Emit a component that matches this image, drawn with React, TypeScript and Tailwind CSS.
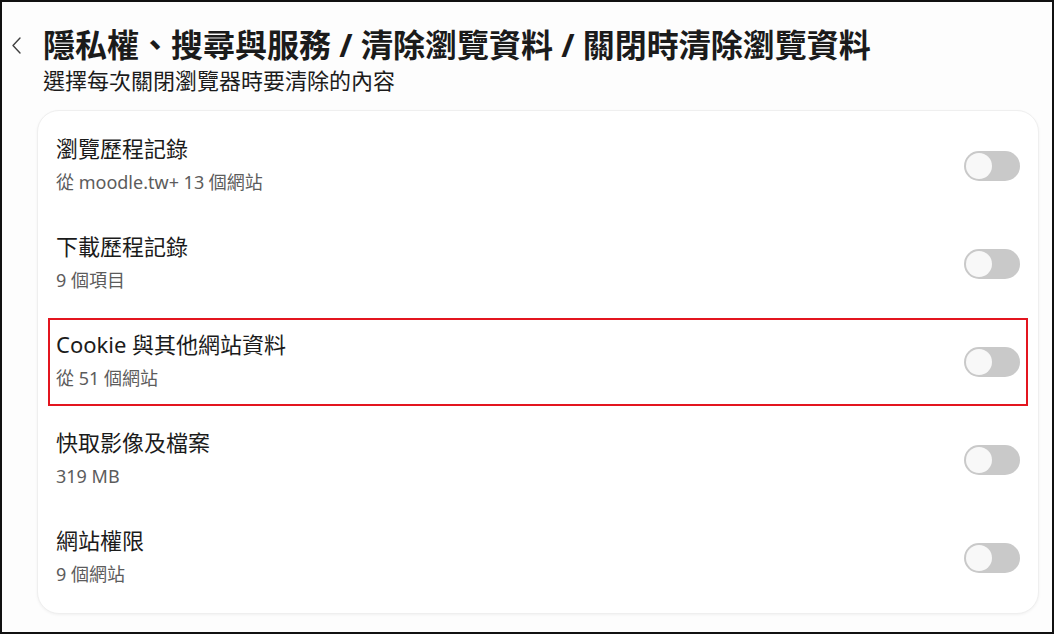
import { memo } from "react";

type TItem = {
  title: string;
  desc: string;
  highlight?: boolean;
};

const ITEMS: TItem[] = [
  { title: "瀏覽歷程記錄", desc: "從 moodle.tw+ 13 個網站" },
  { title: "下載歷程記錄", desc: "9 個項目" },
  { title: "Cookie 與其他網站資料", desc: "從 51 個網站", highlight: true },
  { title: "快取影像及檔案", desc: "319 MB" },
  { title: "網站權限", desc: "9 個網站" },
];

const FONT = {
  fontFamily: '"Noto Sans", "Noto Sans CJK TC", sans-serif',
};

const Toggle = memo(function Toggle() {
  return (
    <span className="flex h-[30px] w-[56px] shrink-0 items-center rounded-full bg-[#c9c9c9] px-[2px]">
      <span className="h-[26px] w-[26px] rounded-full bg-[#f8f8f8]" />
    </span>
  );
});

const Row = memo(function Row({ item }: { item: TItem }) {
  return (
    <div className="h-[98px] px-[10px] py-[5px]">
      <div
        className={
          item.highlight
            ? "flex h-full items-center justify-between border-2 border-[#e3151f] pl-[6px] pr-[6px]"
            : "flex h-full items-center justify-between border-2 border-transparent pl-[6px] pr-[6px]"
        }
      >
        <div className="flex flex-col pb-[5px]">
          <span className="text-[22px] leading-[30px] text-[#1b1b1b]">
            {item.title}
          </span>
          <span className="mt-[6px] text-[18px] leading-[26px] text-[#5c5c5c]">
            {item.desc}
          </span>
        </div>
        <Toggle />
      </div>
    </div>
  );
});

export default function App() {
  return (
    <div
      className="h-[634px] w-[1054px] overflow-hidden border-2 border-[#111] bg-[#fdfdfd]"
      style={FONT}
    >
      <div className="flex items-start pl-[10px] pt-[22px]">
        <div className="flex h-[42px] w-[31px] shrink-0 items-center">
          <svg width="9" height="17" viewBox="0 0 9 17" fill="none">
            <path
              d="M8 1 L1 8.5 L8 16"
              stroke="#404040"
              strokeWidth="1.4"
              strokeLinecap="round"
              strokeLinejoin="round"
            />
          </svg>
        </div>
        <div>
          <h1 className="text-[32px] font-bold leading-[42px] text-[#1b1b1b]">
            隱私權、搜尋與服務 / 清除瀏覽資料 / 關閉時清除瀏覽資料
          </h1>
          <p className="text-[22px] leading-[28px] text-[#1b1b1b]">
            選擇每次關閉瀏覽器時要清除的內容
          </p>
        </div>
      </div>

      <div className="ml-[35px] mt-[16px] w-[1002px] rounded-[22px] border border-[#efefef] bg-white py-[6px] shadow-[0_1px_3px_rgba(0,0,0,0.05)]">
        {ITEMS.map((item) => (
          <Row key={item.title} item={item} />
        ))}
      </div>
    </div>
  );
}
